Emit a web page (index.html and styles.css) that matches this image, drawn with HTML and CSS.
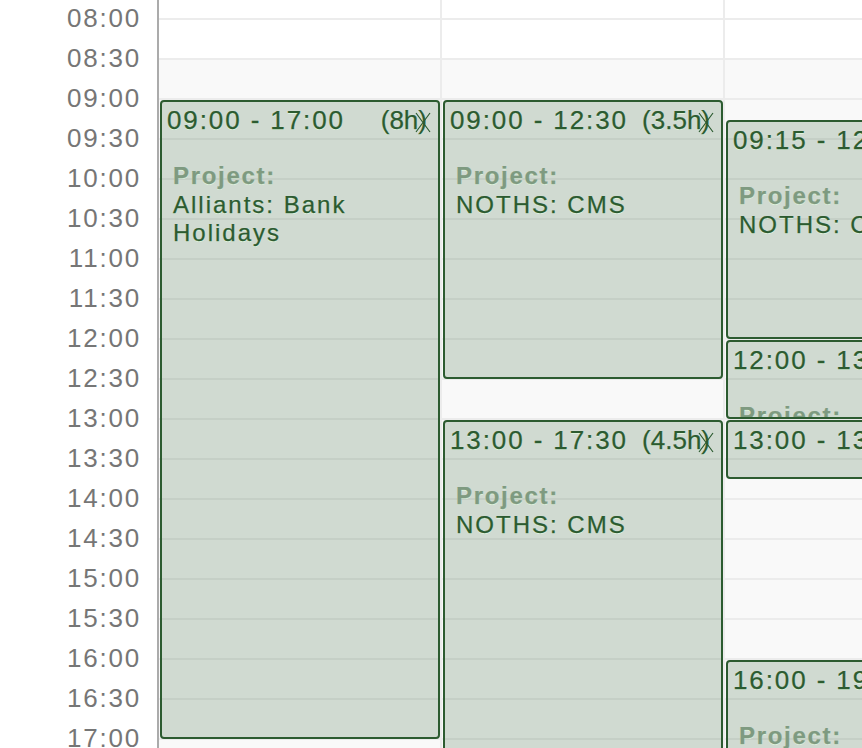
FILE: index.html
```html
<!DOCTYPE html>
<html lang="en">
<head>
<meta charset="utf-8">
<title>Timesheet week</title>
<link rel="stylesheet" href="styles.css">
</head>
<body>
<div class="calendar">
  <div class="times">
    <div class="time">08:00</div>
    <div class="time">08:30</div>
    <div class="time">09:00</div>
    <div class="time">09:30</div>
    <div class="time">10:00</div>
    <div class="time">10:30</div>
    <div class="time">11:00</div>
    <div class="time">11:30</div>
    <div class="time">12:00</div>
    <div class="time">12:30</div>
    <div class="time">13:00</div>
    <div class="time">13:30</div>
    <div class="time">14:00</div>
    <div class="time">14:30</div>
    <div class="time">15:00</div>
    <div class="time">15:30</div>
    <div class="time">16:00</div>
    <div class="time">16:30</div>
    <div class="time">17:00</div>
    <div class="time">17:30</div>
  </div>

  <div class="day">
    <div class="event" style="top:100px;height:639px">
      <div class="event-head"><span class="range">09:00 - 17:00</span><span class="dur">(8h)</span></div>
      <div class="event-body"><div class="label">Project:</div><div class="project">Alliants: Bank Holidays</div></div>
      <svg class="close" viewBox="0 0 16 21" width="16" height="21"><path d="M1 1 L15 20 M15 1 L1 20"/></svg>
    </div>
  </div>

  <div class="day">
    <div class="event" style="top:100px;height:279px">
      <div class="event-head"><span class="range">09:00 - 12:30</span><span class="dur">(3.5h)</span></div>
      <div class="event-body"><div class="label">Project:</div><div class="project">NOTHS: CMS</div></div>
      <svg class="close" viewBox="0 0 16 21" width="16" height="21"><path d="M1 1 L15 20 M15 1 L1 20"/></svg>
    </div>
    <div class="event" style="top:420px;height:359px">
      <div class="event-head"><span class="range">13:00 - 17:30</span><span class="dur">(4.5h)</span></div>
      <div class="event-body"><div class="label">Project:</div><div class="project">NOTHS: CMS</div></div>
      <svg class="close" viewBox="0 0 16 21" width="16" height="21"><path d="M1 1 L15 20 M15 1 L1 20"/></svg>
    </div>
  </div>

  <div class="day">
    <div class="event" style="top:120px;height:219px">
      <div class="event-head"><span class="range">09:15 - 12:00</span><span class="dur">(2.75h)</span></div>
      <div class="event-body"><div class="label">Project:</div><div class="project">NOTHS: CMS</div></div>
      <svg class="close" viewBox="0 0 16 21" width="16" height="21"><path d="M1 1 L15 20 M15 1 L1 20"/></svg>
    </div>
    <div class="event" style="top:340px;height:79px">
      <div class="event-head"><span class="range">12:00 - 13:00</span><span class="dur">(1h)</span></div>
      <div class="event-body"><div class="label">Project:</div><div class="project">NOTHS: CMS</div></div>
      <svg class="close" viewBox="0 0 16 21" width="16" height="21"><path d="M1 1 L15 20 M15 1 L1 20"/></svg>
    </div>
    <div class="event" style="top:420px;height:59px">
      <div class="event-head"><span class="range">13:00 - 13:45</span><span class="dur">(0.75h)</span></div>
      <div class="event-body"><div class="label">Project:</div><div class="project">NOTHS: CMS</div></div>
      <svg class="close" viewBox="0 0 16 21" width="16" height="21"><path d="M1 1 L15 20 M15 1 L1 20"/></svg>
    </div>
    <div class="event" style="top:660px;height:399px">
      <div class="event-head"><span class="range">16:00 - 19:00</span><span class="dur">(3h)</span></div>
      <div class="event-body"><div class="label">Project:</div><div class="project">NOTHS: CMS</div></div>
      <svg class="close" viewBox="0 0 16 21" width="16" height="21"><path d="M1 1 L15 20 M15 1 L1 20"/></svg>
    </div>
  </div>
</div>
</body>
</html>
```

FILE: styles.css
```css
html, body {
  margin: 0;
  padding: 0;
  overflow: hidden;
  background: #ffffff;
}

body {
  width: 862px;
  height: 748px;
  font-family: "Liberation Sans", Arial, Helvetica, sans-serif;
}

.calendar {
  display: flex;
  width: 1200px;
  height: 900px;
}

.times {
  flex: 0 0 157px;
  border-right: 2px solid #ababab;
  background: #ffffff;
}

.time {
  height: 40px;
  line-height: 37px;
  padding-right: 16px;
  text-align: right;
  font-size: 26px;
  letter-spacing: 1.8px;
  color: #767676;
}

.day {
  position: relative;
  flex: 0 0 281px;
  border-right: 2px solid #ececec;
  background:
    repeating-linear-gradient(to bottom,
      transparent 0, transparent 18px,
      #ececec 18px, #ececec 20px,
      transparent 20px, transparent 40px),
    linear-gradient(to bottom, #ffffff 0, #ffffff 60px, #f9f9f9 60px);
}

.event {
  position: absolute;
  left: 1px;
  right: 0;
  box-sizing: border-box;
  overflow: hidden;
  border: 2px solid #2c5b30;
  border-radius: 4px;
  background: rgba(43, 93, 48, 0.2);
  color: #2c5b30;
  text-shadow: 0 1px 0 #def3dd;
  -webkit-text-stroke: 0.25px currentColor;
}

.event-head {
  display: flex;
  padding: 4px 11px 0 5px;
  height: 28px;
  line-height: 28px;
  font-size: 26px;
  letter-spacing: 1.9px;
  white-space: nowrap;
}

.range {
  flex: 0 0 auto;
  margin-right: 10px;
}

.dur {
  margin-left: auto;
  letter-spacing: 0;
}

.event-body {
  padding: 28px 8px 0 11px;
  font-size: 24px;
  line-height: 28.5px;
  letter-spacing: 2px;
}

.label {
  font-weight: bold;
  letter-spacing: 1.7px;
  color: #7e9a80;
}

.project {
  color: #2c5b30;
}

.close {
  position: absolute;
  top: 10px;
  right: 7px;
  fill: none;
  stroke: #2c5b30;
  stroke-width: 1.2;
}
```
